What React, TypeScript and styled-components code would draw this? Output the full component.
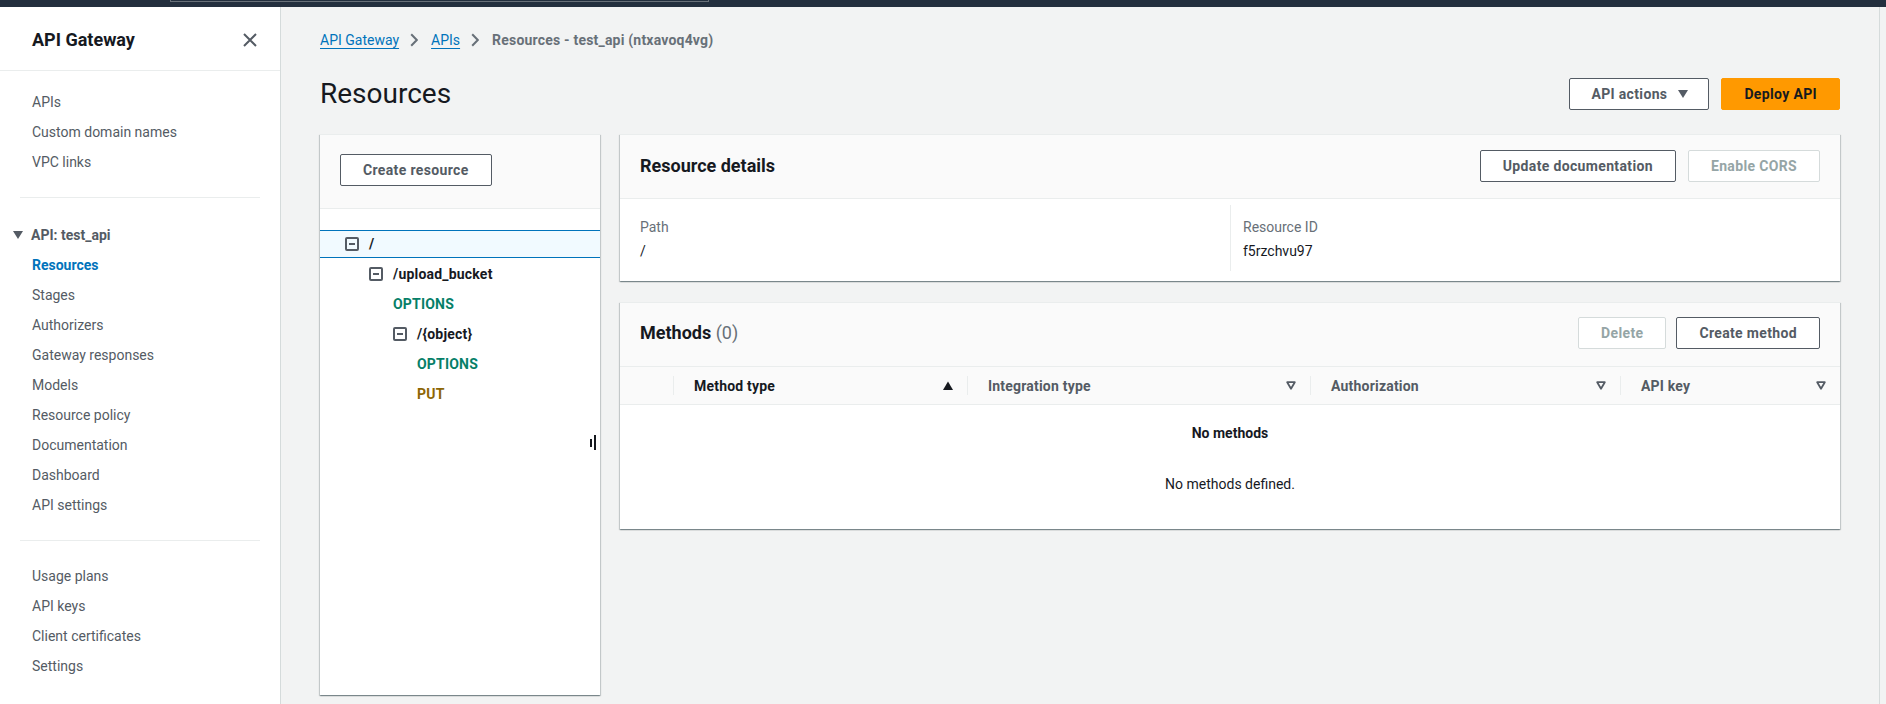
import React from "react";
import styled, { createGlobalStyle, css } from "styled-components";

const GlobalStyle = createGlobalStyle`
  html, body { margin: 0; padding: 0; }
  body {
    font-family: Roboto, "Liberation Sans", Arial, sans-serif;
    font-size: 14px;
    color: #16191f;
    background: #f2f3f3;
  }
  * { box-sizing: border-box; }
`;

const Page = styled.div`
  width: 1886px;
  height: 704px;
  display: flex;
  flex-direction: column;
  overflow: hidden;
`;

const TopBar = styled.div`
  height: 7px;
  background: #232f3e;
  display: flex;
  flex-shrink: 0;
`;

const SearchEdge = styled.div`
  margin-left: 170px;
  width: 539px;
  height: 2px;
  border: 1px solid #687078;
  border-top: none;
`;

const Body = styled.div`
  flex: 1;
  display: flex;
  min-height: 0;
`;

const Sidebar = styled.nav`
  width: 281px;
  flex-shrink: 0;
  background: #ffffff;
  border-right: 1px solid #d5dbdb;
`;

const SideHeader = styled.div`
  height: 64px;
  padding: 3px 23px 0 32px;
  display: flex;
  align-items: center;
  justify-content: space-between;
  border-bottom: 1px solid #eaeded;
`;

const SideTitle = styled.h2`
  margin: 0;
  font-size: 18px;
  line-height: 22px;
  font-weight: 700;
  color: #16191f;
`;

const CloseButton = styled.span`
  display: flex;
  width: 14px;
  height: 14px;
`;

const NavGroup = styled.div<{ $top: number; $bottom: number }>`
  padding: ${(p) => p.$top}px 0 ${(p) => p.$bottom}px;
`;

const NavDivider = styled.hr`
  margin: 0 20px;
  border: none;
  border-top: 1px solid #eaeded;
  height: 0;
`;

const NavItem = styled.div<{ $active?: boolean }>`
  height: 30px;
  line-height: 30px;
  padding-left: 32px;
  font-size: 14px;
  color: #545b64;
  ${(p) =>
    p.$active &&
    css`
      color: #0073bb;
      font-weight: 700;
    `}
`;

const NavSection = styled.div`
  height: 30px;
  display: flex;
  align-items: center;
  gap: 8px;
  padding-left: 13px;
  font-weight: 700;
  color: #545b64;
`;

const Main = styled.main`
  flex: 1;
  min-width: 0;
  padding: 23px 39px 0;
  display: flex;
  flex-direction: column;
`;

const RightRail = styled.div`
  width: 7px;
  flex-shrink: 0;
  border-left: 1px solid #d5dbdb;
  background: #f2f3f3;
`;

const Breadcrumbs = styled.div`
  height: 20px;
  display: flex;
  align-items: center;
  font-size: 14px;
  line-height: 20px;
`;

const Crumb = styled.a`
  color: #0073bb;
  text-decoration: underline;
  text-underline-offset: 3px;
  text-decoration-thickness: 1px;
`;

const CrumbSep = styled.span`
  display: flex;
  margin: 0 13px 0 11px;
`;

const CrumbCurrent = styled.span`
  color: #687078;
  font-weight: 700;
  letter-spacing: 0.2px;
`;

const PageHeader = styled.div`
  margin-top: 28px;
  height: 32px;
  display: flex;
  align-items: center;
  justify-content: space-between;
`;

const H1 = styled.h1`
  margin: 0;
  font-size: 28px;
  line-height: 32px;
  font-weight: 400;
  color: #16191f;
`;

const Actions = styled.div<{ $gap: number }>`
  display: flex;
  align-items: center;
  gap: ${(p) => p.$gap}px;
`;

const Button = styled.button<{ $variant?: "normal" | "primary" | "disabled" }>`
  height: 32px;
  padding: 0 22px;
  display: inline-flex;
  align-items: center;
  gap: 11px;
  font-family: inherit;
  font-size: 14px;
  font-weight: 700;
  letter-spacing: 0.35px;
  border-radius: 2px;
  border: 1px solid #545b64;
  background: #ffffff;
  color: #545b64;
  cursor: pointer;
  ${(p) =>
    p.$variant === "primary" &&
    css`
      background: #ff9900;
      border-color: #ff9900;
      color: #16191f;
    `}
  ${(p) =>
    p.$variant === "disabled" &&
    css`
      border-color: #d5dbdb;
      color: #95a5a6;
      cursor: default;
    `}
`;

const Content = styled.div`
  margin-top: 24px;
  display: flex;
  gap: 20px;
  align-items: flex-start;
`;

const panelShadow = css`
  background: #ffffff;
  border-top: 1px solid #eaeded;
  box-shadow: 0 1px 1px 0 rgba(0, 28, 36, 0.3), 1px 1px 1px 0 rgba(0, 28, 36, 0.15),
    -1px 1px 1px 0 rgba(0, 28, 36, 0.15);
`;

const TreePanel = styled.section`
  ${panelShadow};
  width: 280px;
  height: 561px;
  flex-shrink: 0;
  position: relative;
`;

const TreeHeader = styled.div`
  padding: 19px 20px 22px;
  background: #fafafa;
  border-bottom: 1px solid #eaeded;
`;

const TreeList = styled.div`
  padding-top: 21px;
`;

const TreeRow = styled.div<{ $indent: number; $selected?: boolean }>`
  height: 28px;
  margin-bottom: 2px;
  display: flex;
  align-items: center;
  padding-left: ${(p) => 25 + 24 * p.$indent}px;
  font-weight: 700;
  font-size: 14px;
  letter-spacing: 0.2px;
  color: #16191f;
  ${(p) =>
    p.$selected &&
    css`
      background: #f1faff;
      border-top: 1px solid #0073bb;
      border-bottom: 1px solid #0073bb;
    `}
`;

const MinusBox = styled.span`
  width: 14px;
  height: 14px;
  border: 2px solid #545b64;
  border-radius: 2px;
  margin-right: 10px;
  display: flex;
  align-items: center;
  justify-content: center;
  flex-shrink: 0;
  &::after {
    content: "";
    width: 6px;
    height: 2px;
    background: #545b64;
  }
`;

const MethodName = styled.span<{ $kind: "OPTIONS" | "PUT" }>`
  color: ${(p) => (p.$kind === "PUT" ? "#8d6605" : "#067f68")};
  font-weight: 700;
`;

const ResizeHandle = styled.div`
  position: absolute;
  right: 4px;
  top: 300px;
  display: flex;
  align-items: center;
  gap: 2px;
`;

const HandleBar = styled.span<{ $h: number }>`
  width: 2px;
  height: ${(p) => p.$h}px;
  background: #16191f;
`;

const RightColumn = styled.div`
  flex: 1;
  min-width: 0;
  display: flex;
  flex-direction: column;
  gap: 21px;
`;

const Panel = styled.section`
  ${panelShadow};
`;

const PanelHeader = styled.div<{ $pt: number; $pb: number }>`
  padding: ${(p) => p.$pt}px 20px ${(p) => p.$pb}px;
  background: #fafafa;
  border-bottom: 1px solid #eaeded;
  display: flex;
  align-items: center;
  justify-content: space-between;
`;

const PanelTitle = styled.h2`
  margin: 0;
  font-size: 18px;
  line-height: 22px;
  font-weight: 700;
  color: #16191f;
`;

const Count = styled.span`
  font-weight: 400;
  color: #687078;
`;

const DetailsBody = styled.div`
  padding: 6px 20px 10px;
  display: grid;
  grid-template-columns: 1fr 1fr;
`;

const DetailCol = styled.div<{ $divider?: boolean }>`
  padding: 12px 0 10px;
  ${(p) =>
    p.$divider &&
    css`
      border-left: 1px solid #eaeded;
      padding-left: 12px;
    `}
`;

const Label = styled.div`
  color: #687078;
  line-height: 20px;
  margin-bottom: 4px;
`;

const Value = styled.div`
  color: #16191f;
  line-height: 20px;
`;

const TableHead = styled.div`
  display: grid;
  grid-template-columns: 53px 294px 343px 310px 1fr;
  height: 38px;
  background: #fafafa;
  border-bottom: 1px solid #eaeded;
`;

const HeadCell = styled.div<{ $sorted?: boolean; $sep?: boolean }>`
  position: relative;
  display: flex;
  align-items: center;
  justify-content: space-between;
  padding: 0 14px 0 21px;
  font-weight: 700;
  letter-spacing: 0.2px;
  color: ${(p) => (p.$sorted ? "#16191f" : "#545b64")};
  ${(p) =>
    p.$sep &&
    css`
      &::before {
        content: "";
        position: absolute;
        left: 0;
        top: 9px;
        bottom: 9px;
        width: 1px;
        background: #eaeded;
      }
    `}
`;

const EmptyState = styled.div`
  padding: 18px 0 35px;
  text-align: center;
  line-height: 20px;
  color: #16191f;
`;

const EmptyTitle = styled.div`
  font-weight: 700;
  margin-bottom: 31px;
`;

const Chevron = () => (
  <svg width="8" height="14" viewBox="0 0 8 14">
    <path d="M1.2 1.2L6.8 7L1.2 12.8" fill="none" stroke="#687078" strokeWidth="2" />
  </svg>
);

const CaretDown = ({ color = "#545b64" }: { color?: string }) => (
  <svg width="10" height="8" viewBox="0 0 10 8">
    <path d="M0 0H10L5 8Z" fill={color} />
  </svg>
);

const SortUp = () => (
  <svg width="10" height="9" viewBox="0 0 10 9">
    <path d="M0 9L5 0.5L10 9Z" fill="#16191f" />
  </svg>
);

const SortNone = () => (
  <svg width="10" height="9" viewBox="0 0 10 9">
    <path d="M1.2 1.2H8.8L5 7.8Z" fill="none" stroke="#545b64" strokeWidth="1.8" strokeLinejoin="round" />
  </svg>
);

const CloseIcon = () => (
  <svg width="14" height="14" viewBox="0 0 14 14">
    <path d="M1 1L13 13M13 1L1 13" stroke="#545b64" strokeWidth="2" fill="none" />
  </svg>
);

const navTop = ["APIs", "Custom domain names", "VPC links"];
const navApi = [
  "Resources",
  "Stages",
  "Authorizers",
  "Gateway responses",
  "Models",
  "Resource policy",
  "Documentation",
  "Dashboard",
  "API settings",
];
const navBottom = ["Usage plans", "API keys", "Client certificates", "Settings"];

type TreeNode =
  | { type: "resource"; name: string; level: number; selected?: boolean }
  | { type: "method"; name: "OPTIONS" | "PUT"; level: number };

const tree: TreeNode[] = [
  { type: "resource", name: "/", level: 0, selected: true },
  { type: "resource", name: "/upload_bucket", level: 1 },
  { type: "method", name: "OPTIONS", level: 2 },
  { type: "resource", name: "/{object}", level: 2 },
  { type: "method", name: "OPTIONS", level: 3 },
  { type: "method", name: "PUT", level: 3 },
];

const columns = [
  { name: "Method type", sorted: true },
  { name: "Integration type" },
  { name: "Authorization" },
  { name: "API key" },
];

export default function App() {
  return (
    <Page>
      <GlobalStyle />
      <TopBar>
        <SearchEdge />
      </TopBar>
      <Body>
        <Sidebar>
          <SideHeader>
            <SideTitle>API Gateway</SideTitle>
            <CloseButton>
              <CloseIcon />
            </CloseButton>
          </SideHeader>
          <NavGroup $top={16} $bottom={20}>
            {navTop.map((n) => (
              <NavItem key={n}>{n}</NavItem>
            ))}
          </NavGroup>
          <NavDivider />
          <NavGroup $top={22} $bottom={20}>
            <NavSection>
              <CaretDown />
              API: test_api
            </NavSection>
            {navApi.map((n) => (
              <NavItem key={n} $active={n === "Resources"}>
                {n}
              </NavItem>
            ))}
          </NavGroup>
          <NavDivider />
          <NavGroup $top={20} $bottom={0}>
            {navBottom.map((n) => (
              <NavItem key={n}>{n}</NavItem>
            ))}
          </NavGroup>
        </Sidebar>
        <Main>
          <Breadcrumbs>
            <Crumb>API Gateway</Crumb>
            <CrumbSep>
              <Chevron />
            </CrumbSep>
            <Crumb>APIs</Crumb>
            <CrumbSep>
              <Chevron />
            </CrumbSep>
            <CrumbCurrent>Resources - test_api (ntxavoq4vg)</CrumbCurrent>
          </Breadcrumbs>
          <PageHeader>
            <H1>Resources</H1>
            <Actions $gap={12}>
              <Button style={{ paddingLeft: 21, paddingRight: 20 }}>
                API actions
                <CaretDown />
              </Button>
              <Button $variant="primary">Deploy API</Button>
            </Actions>
          </PageHeader>
          <Content>
            <TreePanel>
              <TreeHeader>
                <Button>Create resource</Button>
              </TreeHeader>
              <TreeList>
                {tree.map((node, i) =>
                  node.type === "resource" ? (
                    <TreeRow key={i} $indent={node.level} $selected={node.selected}>
                      <MinusBox />
                      {node.name}
                    </TreeRow>
                  ) : (
                    <TreeRow key={i} $indent={node.level}>
                      <MethodName $kind={node.name}>{node.name}</MethodName>
                    </TreeRow>
                  )
                )}
              </TreeList>
              <ResizeHandle>
                <HandleBar $h={8} />
                <HandleBar $h={15} />
              </ResizeHandle>
            </TreePanel>
            <RightColumn>
              <Panel>
                <PanelHeader $pt={15} $pb={16}>
                  <PanelTitle>Resource details</PanelTitle>
                  <Actions $gap={12}>
                    <Button>Update documentation</Button>
                    <Button $variant="disabled">Enable CORS</Button>
                  </Actions>
                </PanelHeader>
                <DetailsBody>
                  <DetailCol>
                    <Label>Path</Label>
                    <Value>/</Value>
                  </DetailCol>
                  <DetailCol $divider>
                    <Label>Resource ID</Label>
                    <Value>f5rzchvu97</Value>
                  </DetailCol>
                </DetailsBody>
              </Panel>
              <Panel>
                <PanelHeader $pt={14} $pb={17}>
                  <PanelTitle>
                    Methods <Count>(0)</Count>
                  </PanelTitle>
                  <Actions $gap={10}>
                    <Button $variant="disabled">Delete</Button>
                    <Button>Create method</Button>
                  </Actions>
                </PanelHeader>
                <TableHead>
                  <HeadCell />
                  {columns.map((c) => (
                    <HeadCell key={c.name} $sep $sorted={c.sorted}>
                      <span>{c.name}</span>
                      {c.sorted ? <SortUp /> : <SortNone />}
                    </HeadCell>
                  ))}
                </TableHead>
                <EmptyState>
                  <EmptyTitle>No methods</EmptyTitle>
                  <div>No methods defined.</div>
                </EmptyState>
              </Panel>
            </RightColumn>
          </Content>
        </Main>
        <RightRail />
      </Body>
    </Page>
  );
}
